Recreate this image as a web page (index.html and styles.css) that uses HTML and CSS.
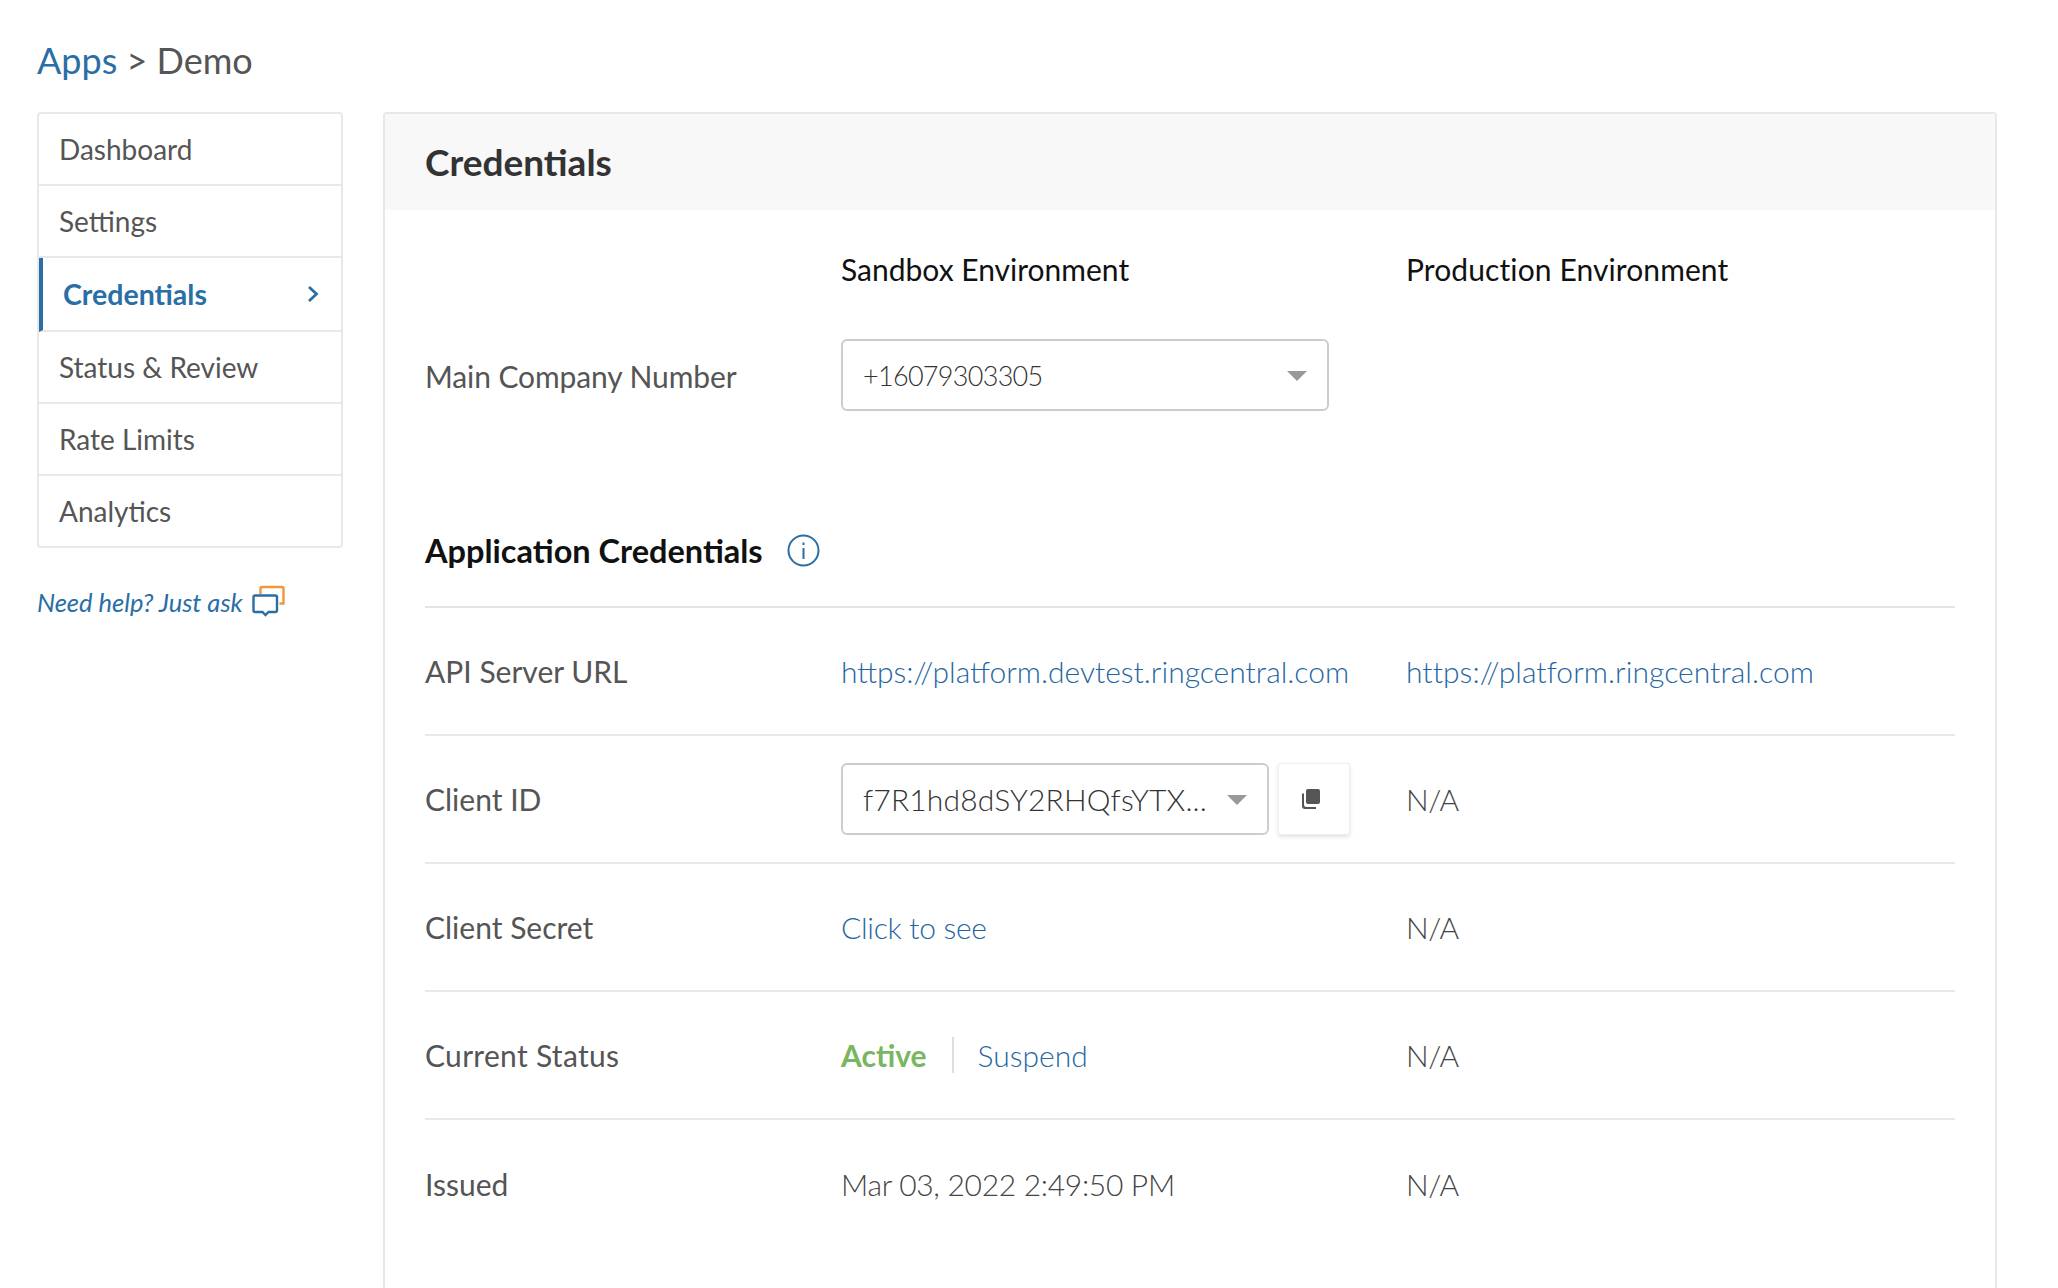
FILE: index.html
```html
<!DOCTYPE html>
<html lang="en">
<head>
    <meta charset="UTF-8">
    <title>Credentials - Demo</title>
    <link rel="stylesheet" href="styles.css">
</head>
<body>

<h1 class="crumbs"><a href="#">Apps</a> <span>&gt;</span> Demo</h1>

<div class="layout">
    <aside class="side">
        <ul class="side-nav">
            <li>Dashboard</li>
            <li>Settings</li>
            <li class="current">
                Credentials
                <svg class="chev" width="12" height="18" viewBox="0 0 12 18"><path d="M2 2l7.500 7L2 16" fill="none" stroke="#2a6ea6" stroke-width="2.800"/></svg>
            </li>
            <li>Status &amp; Review</li>
            <li>Rate Limits</li>
            <li>Analytics</li>
        </ul>
        <a class="help" href="#">
            Need help? Just ask
            <svg width="33" height="33" viewBox="0 0 33 33">
                <path d="M8.500 9V3.500A1.500 1.500 0 0 1 10 2h20a1.500 1.500 0 0 1 1.500 1.500V18.500h-4" fill="none" stroke="#f0973a" stroke-width="2.400"/>
                <path d="M3 10.500h20.500a1.500 1.500 0 0 1 1.500 1.500v13.500a1.500 1.500 0 0 1-1.500 1.500h-7l-3 3-3-3H3a1.500 1.500 0 0 1-1.500-1.500V12A1.500 1.500 0 0 1 3 10.500z" fill="#fff" stroke="#2a6ea6" stroke-width="2.400"/>
            </svg>
        </a>
    </aside>

    <main class="panel">
        <h2 class="panel-title">Credentials</h2>
        <div class="panel-body">
            <div class="env-row">
                <div></div>
                <div class="env">Sandbox Environment</div>
                <div class="env env-prod">Production Environment</div>
            </div>
            <div class="company-row">
                <div class="label">Main Company Number</div>
                <div class="select select-wide"><span class="phone">+16079303305</span><span class="caret"></span></div>
                <div></div>
            </div>

            <div class="section-head">
                <h3>Application Credentials</h3>
                <svg width="33" height="33" viewBox="0 0 33 33">
                    <circle cx="16.500" cy="16.500" r="15" fill="none" stroke="#2a6ea6" stroke-width="2"/>
                    <rect x="15.500" y="14" width="2" height="11" fill="#2a6ea6"/>
                    <rect x="15.500" y="8.500" width="2" height="2.500" fill="#2a6ea6"/>
                </svg>
            </div>

            <div class="row">
                <div class="label">API Server URL</div>
                <div><a href="#">https://platform.devtest.ringcentral.com</a></div>
                <div><a class="url" href="#">https://platform.ringcentral.com</a></div>
            </div>
            <div class="row">
                <div class="label">Client ID</div>
                <div class="client-id">
                    <div class="select select-id">f7R1hd8dSY2RHQfsYTX...<span class="caret"></span></div>
                    <button class="copy-btn" type="button">
                        <svg width="20" height="22" viewBox="0 0 20 22">
                            <rect x="5" y="1" width="14" height="15" rx="2" fill="#555"/>
                            <path d="M3 5.500v11a2.500 2.500 0 0 0 2.500 2.500H15v2H4a3 3 0 0 1-3-3V5.500z" fill="#555"/>
                        </svg>
                    </button>
                </div>
                <div class="value tight">N/A</div>
            </div>
            <div class="row">
                <div class="label">Client Secret</div>
                <div><a class="tight" href="#">Click to see</a></div>
                <div class="value tight">N/A</div>
            </div>
            <div class="row">
                <div class="label label-wide">Current Status</div>
                <div class="status">
                    <span class="active">Active</span>
                    <a href="#">Suspend</a>
                </div>
                <div class="value tight">N/A</div>
            </div>
            <div class="row">
                <div class="label">Issued</div>
                <div class="value tight">Mar 03, 2022 2:49:50 PM</div>
                <div class="value tight">N/A</div>
            </div>
        </div>
    </main>
</div>

</body>
</html>
```

FILE: styles.css
```css
* {
    box-sizing: border-box;
}
html, body {
    height: 100%;
    overflow: hidden;
}
body {
    font-family: Lato, sans-serif;
    background: #fff;
    color: #555;
    margin: 0;
    padding: 36px 61px 0 37px;
}
a {
    color: #2a6ea6;
    text-decoration: none;
}
.crumbs {
    font-size: 36px;
    font-weight: 400;
    line-height: 48px;
    margin: 0 0 28px;
    color: #555;
}
.layout {
    display: flex;
    gap: 40px;
    align-items: flex-start;
}
.side {
    width: 306px;
    flex: none;
}
.side-nav {
    list-style: none;
    margin: 0;
    padding: 0;
    border: 2px solid #e8e8e8;
    border-radius: 4px;
}
.side-nav li {
    height: 72px;
    padding: 0 20px;
    display: flex;
    align-items: center;
    justify-content: space-between;
    font-size: 28px;
    border-bottom: 2px solid #e8e8e8;
}
.side-nav li:last-child {
    height: 70px;
    border-bottom: none;
}
.side-nav .current {
    height: 74px;
    color: #2a6ea6;
    font-size: 28.500px;
    font-weight: 700;
    border-left: 4px solid #2a6ea6;
    padding-left: 20px;
}
.chev {
    margin-right: 2px;
}
.help {
    display: flex;
    align-items: center;
    gap: 9px;
    margin-top: 37px;
    font-size: 25.500px;
    font-style: italic;
}
.panel {
    flex: 1;
    height: 1300px;
    border: 2px solid #e8e8e8;
    border-bottom: none;
    border-radius: 4px 4px 0 0;
}
.panel-title {
    margin: 0;
    height: 96px;
    padding: 0 40px 2px;
    display: flex;
    align-items: center;
    background: #f8f8f8;
    color: #333;
    font-size: 37px;
    font-weight: 700;
}
.panel-body {
    padding: 0 40px;
}
.env-row, .company-row, .row {
    display: grid;
    grid-template-columns: 416px 565px 1fr;
    align-items: center;
}
.env-row {
    height: 118px;
}
.env {
    font-size: 30px;
    color: #111;
}
.env-prod {
    letter-spacing: 0.100px;
}
.company-row {
    height: 83px;
    padding-top: 11px;
    align-items: start;
}
.company-row .label {
    line-height: 74px;
    letter-spacing: -0.100px;
}
.label {
    font-size: 30px;
    color: #555;
}
.label-wide {
    letter-spacing: 0.300px;
}
.value, .row a {
    font-size: 30px;
    font-weight: 300;
}
.row a {
    color: #1f66a2;
}
.row .url {
    letter-spacing: 0.050px;
}
.value {
    color: #444;
}
.tight {
    letter-spacing: -0.300px;
}
.select {
    position: relative;
    height: 72px;
    border: 2px solid #ccc;
    border-radius: 6px;
    padding: 0 20px;
    display: flex;
    align-items: center;
    font-size: 30px;
    font-weight: 300;
    color: #333;
}
.select-wide {
    width: 488px;
}
.phone {
    font-size: 27px;
    letter-spacing: -0.700px;
}
.select-id {
    width: 428px;
    letter-spacing: 0.150px;
}
.caret {
    position: absolute;
    right: 20px;
    top: 30px;
    border-left: 10px solid transparent;
    border-right: 10px solid transparent;
    border-top: 10px solid #999;
}
.section-head {
    height: 197px;
    padding-top: 84px;
    display: flex;
    align-items: center;
    gap: 24px;
    border-bottom: 2px solid #e4e4e4;
}
.section-head h3 {
    margin: 0;
    font-size: 32.500px;
    font-weight: 700;
    color: #111;
}
.row {
    height: 128px;
    border-bottom: 2px solid #e8e8e8;
}
.row:last-child {
    border-bottom: none;
}
.client-id {
    display: flex;
    gap: 9px;
}
.copy-btn {
    width: 72px;
    height: 72px;
    padding: 2px 6px 0 0;
    border: 1px solid #eee;
    border-radius: 3px;
    background: #fff;
    box-shadow: 0 2px 4px rgba(0,0,0,0.12);
}
.status {
    display: flex;
    align-items: center;
}
.active {
    font-size: 30px;
    font-weight: 700;
    color: #7ab661;
    padding-right: 25px;
    margin-right: 24px;
    border-right: 2px solid #ddd;
    line-height: 36px;
}
```
